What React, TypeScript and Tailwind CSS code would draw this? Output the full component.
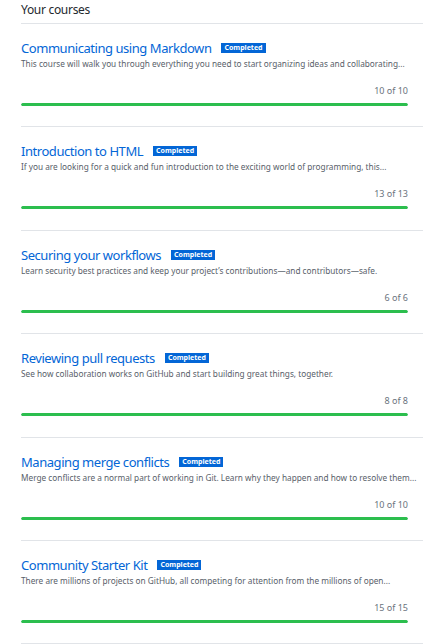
const courses = [
  {
    title: 'Communicating using Markdown',
    desc: 'This course will walk you through everything you need to start organizing ideas and collaborating...',
    done: 10,
    total: 10,
  },
  {
    title: 'Introduction to HTML',
    desc: 'If you are looking for a quick and fun introduction to the exciting world of programming, this...',
    done: 13,
    total: 13,
  },
  {
    title: 'Securing your workflows',
    desc: 'Learn security best practices and keep your project\u2019s contributions\u2014and contributors\u2014safe.',
    done: 6,
    total: 6,
  },
  {
    title: 'Reviewing pull requests',
    desc: 'See how collaboration works on GitHub and start building great things, together.',
    done: 8,
    total: 8,
  },
  {
    title: 'Managing merge conflicts',
    desc: 'Merge conflicts are a normal part of working in Git. Learn why they happen and how to resolve them...',
    done: 10,
    total: 10,
  },
  {
    title: 'Community Starter Kit',
    desc: 'There are millions of projects on GitHub, all competing for attention from the millions of open...',
    done: 15,
    total: 15,
  },
];

const CourseRow = ({ title, desc, done, total }: (typeof courses)[number]) => (
  <div className="h-[103.4px] border-t border-[#e1e4e8] pr-[15px] flex flex-col">
    <div className="flex items-center gap-[10px] mt-[15px] h-[18px]">
      <a className="text-[13px] leading-[18px] tracking-[-0.45px] text-[#0366d6]">{title}</a>
      <span className="bg-[#0366d6] text-white text-[7px] font-bold leading-[10px] px-[3px]">Completed</span>
    </div>
    <p className="text-[8.25px] leading-[12px] text-[#586069] mt-[1px] whitespace-nowrap">{desc}</p>
    <div className="text-right text-[9px] leading-[12px] text-[#6a737d] mt-[15px]">
      {done} of {total}
    </div>
    <div className="mt-[6px] h-[3px] bg-[#e1e4e8] rounded-full overflow-hidden">
      <div className="h-full bg-[#2cbe4e] rounded-full" style={{ width: `${(done / total) * 100}%` }} />
    </div>
  </div>
);

export default function App() {
  return (
    <div className="min-h-[644px] bg-white pl-[21px] pr-[16px]" style={{ fontFamily: '"Noto Sans", "Open Sans", sans-serif' }}>
      <h2 className="pt-[1px] h-[23px] text-[12px] leading-[18px] tracking-[-0.3px] text-[#24292e]">Your courses</h2>
      {courses.map((c) => (
        <CourseRow key={c.title} {...c} />
      ))}
      <div className="border-t border-[#e1e4e8]" />
    </div>
  );
}
